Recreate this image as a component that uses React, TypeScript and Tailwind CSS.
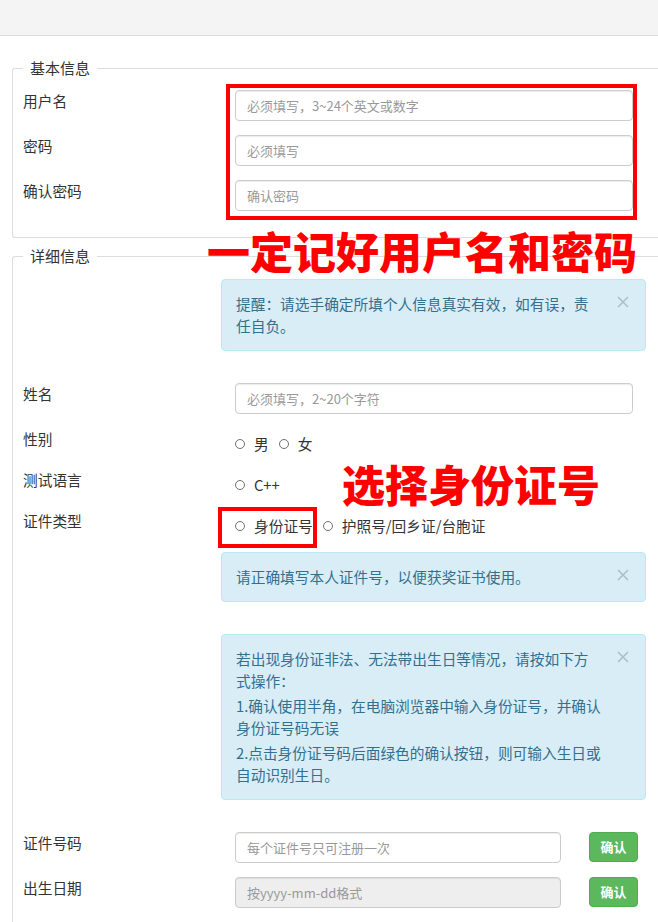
import React from 'react'

const cjk = "font-['Noto_Sans_CJK_SC','Noto_Sans',sans-serif]"

function Legend({ text }: { text: string }) {
  return <legend className="px-[7px] text-[15px] leading-5 text-[#333]">{text}</legend>
}

function Label({ text }: { text: string }) {
  return <div className="w-[198px] shrink-0 pt-px text-[14.7px] leading-5 text-[#333]">{text}</div>
}

function TextInput({ placeholder, width, disabled }: { placeholder: string; width: string; disabled?: boolean }) {
  return (
    <input
      disabled={disabled}
      placeholder={placeholder}
      className={`${width} ml-[14px] h-[31px] rounded-[4px] border border-[#ccc] px-[11px] text-[13px] text-[#555] shadow-[inset_0_1px_1px_rgba(0,0,0,0.075)] outline-none placeholder:text-[#999] ${
        disabled ? 'bg-[#eee]' : 'bg-white'
      }`}
    />
  )
}

function Radio({ text }: { text: string }) {
  return (
    <span className="flex items-center">
      <span className="mr-[9px] h-[10px] w-[10px] rounded-full border border-[#707070] bg-white" />
      <span>{text}</span>
    </span>
  )
}

function CloseX() {
  return (
    <svg width="12" height="12" viewBox="0 0 12 12" className="mt-[3px] shrink-0">
      <path d="M1 1L11 11M11 1L1 11" stroke="#a9c0cc" strokeWidth="1.6" />
    </svg>
  )
}

function Alert({ children, className }: { children: React.ReactNode; className: string }) {
  return (
    <div
      className={`ml-[198px] flex w-[425px] rounded-[4px] border border-[#bce8f1] bg-[#d9edf7] pb-[13px] pl-[14px] pr-[16px] pt-[13px] text-[14.7px] leading-[22px] text-[#31708f] ${className}`}
    >
      <div className="flex-1">{children}</div>
      <CloseX />
    </div>
  )
}

function GreenButton() {
  return (
    <button className="ml-[28px] h-[30px] w-[49px] rounded-[4px] border border-[#4cae4c] bg-[#5cb85c] text-[13px] font-bold text-white">
      确认
    </button>
  )
}

export default function App() {
  return (
    <div className={`relative h-[922px] w-[658px] overflow-hidden bg-white text-[#333] ${cjk}`}>
      <div className="h-[36px] border-b border-[#dddddd] bg-[#f4f4f4]" />

      {/* 基本信息 */}
      <fieldset className="ml-[12px] mt-[22px] rounded-tl-[3px] rounded-bl-[3px] border border-r-0 border-[#dddddd] pb-[12px] pl-[10px]">
        <Legend text="基本信息" />
        <div className="pt-[12px]">
          <div className="flex h-[45px]">
            <Label text="用户名" />
            <TextInput width="w-[398px]" placeholder="必须填写，3~24个英文或数字" />
          </div>
          <div className="flex h-[45px]">
            <Label text="密码" />
            <TextInput width="w-[398px]" placeholder="必须填写" />
          </div>
          <div className="flex h-[45px]">
            <Label text="确认密码" />
            <TextInput width="w-[398px]" placeholder="确认密码" />
          </div>
        </div>
      </fieldset>

      {/* 详细信息 */}
      <fieldset className="ml-[12px] mt-[8px] rounded-tl-[3px] border-l border-t border-[#dddddd] pl-[10px]">
        <Legend text="详细信息" />
        <div className="pt-[13px]">
          <Alert className="mb-[32px]">
            提醒：请选手确定所填个人信息真实有效，如有误，责
            <br />
            任自负。
          </Alert>

          <div className="flex h-[45px]">
            <Label text="姓名" />
            <TextInput width="w-[398px]" placeholder="必须填写，2~20个字符" />
          </div>

          <div className="flex h-[41px]">
            <Label text="性别" />
            <div className="ml-[14px] flex items-start gap-[10px] pt-[6px] text-[14.7px] leading-5">
              <Radio text="男" />
              <Radio text="女" />
            </div>
          </div>

          <div className="flex h-[41px]">
            <Label text="测试语言" />
            <div className="ml-[14px] flex items-start gap-[10px] pt-[6px] text-[14.7px] leading-5">
              <Radio text="C++" />
            </div>
          </div>

          <div className="flex h-[42px]">
            <Label text="证件类型" />
            <div className="ml-[14px] flex items-start gap-[10px] pt-[6px] text-[14.7px] leading-5">
              <Radio text="身份证号" />
              <Radio text="护照号/回乡证/台胞证" />
            </div>
          </div>

          <Alert className="mb-[32px]">请正确填写本人证件号，以便获奖证书使用。</Alert>

          <Alert className="mb-[32px]">
            <p>
              若出现身份证非法、无法带出生日等情况，请按如下方
              <br />
              式操作：
            </p>
            <p className="mt-[3px]">
              1.确认使用半角，在电脑浏览器中输入身份证号，并确认
              <br />
              身份证号码无误
            </p>
            <p className="mt-[3px]">
              2.点击身份证号码后面绿色的确认按钮，则可输入生日或
              <br />
              自动识别生日。
            </p>
          </Alert>

          <div className="flex h-[45px]">
            <Label text="证件号码" />
            <TextInput width="w-[326px]" placeholder="每个证件号只可注册一次" />
            <GreenButton />
          </div>
          <div className="flex h-[45px]">
            <Label text="出生日期" />
            <TextInput width="w-[326px]" placeholder="按yyyy-mm-dd格式" disabled />
            <GreenButton />
          </div>
        </div>
      </fieldset>

      {/* annotations */}
      <div className="pointer-events-none absolute left-[226px] top-[84px] h-[136px] w-[411px] border-[4px] border-[#ff0000]" />
      <div className="pointer-events-none absolute left-[207px] top-[229px] whitespace-nowrap text-[43px] font-black leading-none text-[#ff0000]">
        一定记好用户名和密码
      </div>
      <div className="pointer-events-none absolute left-[342px] top-[462px] whitespace-nowrap text-[43px] font-black leading-none text-[#ff0000]">
        选择身份证号
      </div>
      <div className="pointer-events-none absolute left-[218px] top-[507px] h-[41px] w-[99px] border-[4px] border-[#ff0000]" />
    </div>
  )
}
